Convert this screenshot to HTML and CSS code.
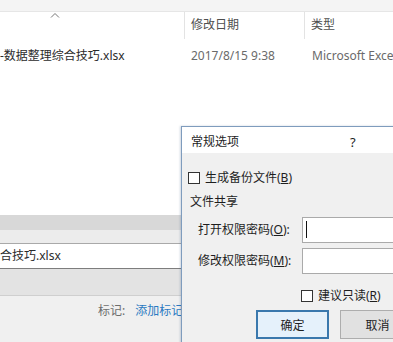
FILE: index.html
```html
<!DOCTYPE html>
<html lang="zh-CN">
<head>
<meta charset="utf-8">
<title>常规选项</title>
<link rel="stylesheet" href="styles.css">
</head>
<body>
<div class="explorer">
  <div class="topstrip"></div>
  <div class="cols header">
    <div class="cell first"><svg class="sort" width="10" height="6" viewBox="0 0 10 6"><path d="M1 5.5 L5 1.5 L9 5.5" fill="none" stroke="#777" stroke-width="1"/></svg></div>
    <div class="cell sep"><span class="htext">修改日期</span></div>
    <div class="cell sep"><span class="htext">类型</span></div>
  </div>
  <div class="cols row">
    <div class="cell name">-数据整理综合技巧.xlsx</div>
    <div class="cell date">2017/8/15 9:38</div>
    <div class="cell type">Microsoft Excel 工作表</div>
  </div>
  <div class="spacer"></div>
  <div class="band1"></div>
  <div class="band2"></div>
  <div class="fname">合技巧.xlsx</div>
  <div class="band3"></div>
  <div class="footer">
    <span class="tag-label">标记:</span><span class="tag-link">添加标记</span>
  </div>
</div>

<div class="dialog">
  <div class="titlebar">
    <span class="title">常规选项</span>
    <span class="help">?</span>
  </div>
  <div class="dbody">
    <label class="check-row">
      <span class="box"></span><span>生成备份文件(<u>B</u>)</span>
    </label>
    <div class="group">文件共享</div>
    <div class="field">
      <span class="flabel">打开权限密码(<u>O</u>):</span>
      <span class="input"><span class="caret"></span></span>
    </div>
    <div class="field">
      <span class="flabel">修改权限密码(<u>M</u>):</span>
      <span class="input"></span>
    </div>
    <label class="check-row ro">
      <span class="box"></span><span>建议只读(<u>R</u>)</span>
    </label>
    <div class="buttons">
      <span class="btn primary">确定</span>
      <span class="btn">取消</span>
    </div>
  </div>
</div>
</body>
</html>
```

FILE: styles.css
```css
* { box-sizing: border-box; }
html, body { margin: 0; padding: 0; }
body {
  width: 393px;
  height: 342px;
  overflow: hidden;
  position: relative;
  background: #ffffff;
  font-family: "Noto Sans", "Noto Sans CJK SC", sans-serif;
  font-size: 12px;
  color: #333;
}
.explorer {
  display: flex;
  flex-direction: column;
  height: 342px;
}
.topstrip {
  height: 12px;
  background: #f4f4f4;
  border-bottom: 1px solid #e6e6e6;
  flex: none;
}
.cols {
  display: grid;
  grid-template-columns: 184px 120px 1fr;
  flex: none;
}
.header { height: 27px; }
.header .cell { height: 27px; }
.cell { white-space: nowrap; overflow: hidden; }
.first { display: flex; align-items: flex-start; }
.sort { margin: 0 0 0 50px; }
.sep { border-left: 1px solid #e3e3e3; }
.htext {
  display: block;
  padding: 5px 0 0 6px;
  line-height: 16px;
  color: #4e4e4e;
}
.row { height: 30px; padding-top: 9px; line-height: 16px; }
.name { padding-left: 0; color: #2b2b2b; }
.date { padding-left: 7px; color: #6a6a6a; }
.type { padding-left: 8px; color: #6a6a6a; }
.spacer { flex: 1; }
.band1 { height: 15px; background: #d8d8d8; flex: none; }
.band2 { height: 13px; background: #ececec; flex: none; }
.fname {
  height: 26px;
  background: #fff;
  border-top: 1px solid #a9a9a9;
  border-bottom: 1px solid #7d7d7d;
  line-height: 24px;
  padding-left: 0;
  color: #2b2b2b;
  flex: none;
}
.band3 {
  height: 27px;
  background: #e3e3e3;
  border-bottom: 1px solid #cfcfcf;
  flex: none;
}
.footer {
  flex: none;
  height: 46px;
  background: #f0f0f0;
  padding: 6px 0 0 98px;
  line-height: 18px;
  white-space: nowrap;
}
.tag-label { color: #6d6d6d; margin-right: 10px; }
.tag-link { color: #2a7ac2; }

.dialog {
  position: absolute;
  left: 181px;
  top: 126px;
  width: 250px;
  height: 260px;
  background: #f0f0f0;
  border: 1px solid #7f9cbd;
  box-shadow: -1px 0 2px rgba(60, 90, 130, 0.25);
}
.titlebar {
  height: 26px;
  background: #ffffff;
  display: grid;
  grid-template-columns: 159px auto;
  align-items: center;
  padding: 3px 0 0 9px;
  line-height: 16px;
  color: #1e1e1e;
}
.help { font-size: 13px; }
.dbody { padding: 18px 0 0 6px; color: #1e1e1e; }
.check-row {
  display: flex;
  align-items: center;
  gap: 5px;
  height: 14px;
  line-height: 14px;
}
.box {
  width: 12px;
  height: 12px;
  border: 1px solid #333;
  background: #fff;
  flex: none;
}
.group {
  margin-top: 9px;
  height: 16px;
  line-height: 16px;
  padding-left: 2px;
}
.field {
  display: grid;
  grid-template-columns: 104px auto;
  align-items: center;
  padding-left: 10px;
  height: 26px;
  margin-top: 7px;
}
.field + .field { margin-top: 5px; }
.flabel { line-height: 16px; white-space: nowrap; }
.input {
  display: block;
  height: 26px;
  width: 120px;
  background: #fff;
  border: 1px solid #aaaaaa;
  position: relative;
}
.caret {
  position: absolute;
  left: 3px;
  top: 3px;
  width: 1px;
  height: 17px;
  background: #111;
}
.ro { margin-top: 15px; padding-left: 113px; }
.buttons {
  display: flex;
  gap: 11px;
  margin-top: 7px;
  padding-left: 68px;
}
.btn {
  display: flex;
  align-items: center;
  justify-content: center;
  width: 75px;
  height: 29px;
  background: #e1e1e1;
  border: 1px solid #adadad;
  color: #1e1e1e;
  flex: none;
}
.btn.primary {
  width: 73px;
  background: #e5f1fb;
  border: 2px solid #3a78ad;
}
```
